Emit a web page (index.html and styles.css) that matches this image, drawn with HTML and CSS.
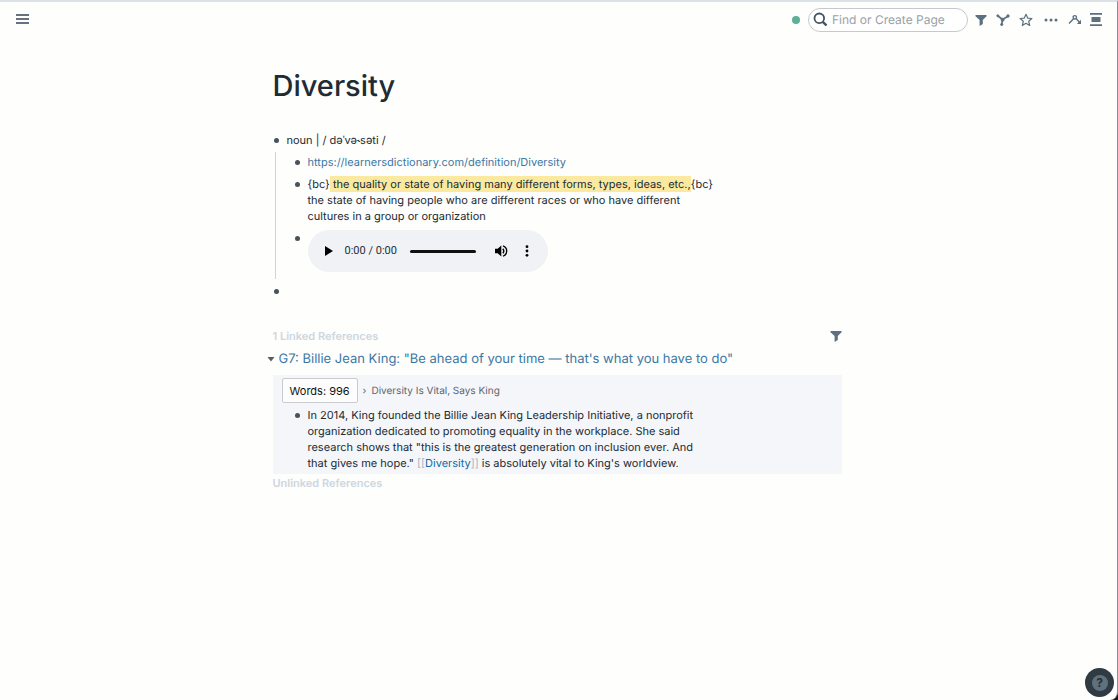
FILE: index.html
```html
<!DOCTYPE html>
<html lang="en">
<head>
  <meta charset="UTF-8">
  <title>Diversity</title>
  <link rel="stylesheet" href="styles.css">
</head>
<body>
  <div class="app">
    <header class="topbar">
      <button class="icon-btn menu-btn" type="button" aria-label="Menu">
        <svg width="14" height="12" viewBox="0 0 14 12" fill="#66737f"><path d="M0 0h13v2H0zM0 4h13v2H0zM0 8h13v2H0z"/></svg>
      </button>

      <div class="tools">
        <span class="status"></span>
        <label class="search">
          <svg width="15" height="15" viewBox="0 0 15 15" fill="none" stroke="#43535f" stroke-width="1.8"><circle cx="6.3" cy="6.3" r="4.8"/><path d="M9.8 9.8l3.7 3.7" stroke-width="2.4"/></svg>
          <input type="text" placeholder="Find or Create Page" aria-label="Find or Create Page">
        </label>
        <button class="icon-btn filter-btn" type="button" aria-label="Filter">
          <svg width="12" height="12" viewBox="0 0 12 12" fill="#5c7080"><path d="M1 1h10a.7.7 0 0 1 .5 1.2L7.800 6v4L4.600 11.900V6L.5 2.200A.7.7 0 0 1 1 1z"/></svg>
        </button>
        <button class="icon-btn graph-btn" type="button" aria-label="Graph">
          <svg width="14" height="14" viewBox="0 0 14 14" fill="#5c7080" stroke="#5c7080"><path d="M2 3l4.500 3.500L12 3.200M6.500 6.500l-.8 5" fill="none" stroke-width="1.700"/><circle cx="1.800" cy="2.800" r="1"/><circle cx="12" cy="3" r="1.200"/><circle cx="6.600" cy="6.700" r="1.500"/><circle cx="5.700" cy="11.500" r="1.100"/></svg>
        </button>
        <button class="icon-btn star-btn" type="button" aria-label="Add shortcut">
          <svg width="14" height="14" viewBox="0 0 14 14" fill="none" stroke="#5c7080" stroke-width="1.2" stroke-linejoin="round"><path d="M7 1.3l1.7 3.8 4.2.4-3.2 2.8 1 4.200L7 10.300l-3.700 2.200 1-4.200L1.100 5.500l4.200-.4z"/></svg>
        </button>
        <button class="icon-btn more-btn" type="button" aria-label="More">
          <svg width="14" height="4" viewBox="0 0 14 4" fill="#5c7080"><circle cx="2" cy="2" r="1.5"/><circle cx="7" cy="2" r="1.5"/><circle cx="12" cy="2" r="1.5"/></svg>
        </button>
        <button class="icon-btn path-btn" type="button" aria-label="Path">
          <svg width="14" height="12" viewBox="0 0 14 12" fill="none" stroke="#5c7080" stroke-width="1.4"><path d="M1 9.500l4.600-4.700M8 4.600l3.500 3.700"/><circle cx="6.800" cy="3.300" r="1.700"/><path d="M13 5.800V10H8.800z" fill="#5c7080" stroke="none"/></svg>
        </button>
        <button class="icon-btn side-btn" type="button" aria-label="Open right sidebar">
          <svg width="12" height="13" viewBox="0 0 12 13" fill="#5c7080"><path d="M0 0h12v1.700H0zM0 11.300h12V13H0z"/><rect x="1.500" y="4" width="9" height="5" rx=".6"/></svg>
        </button>
      </div>
    </header>

    <main class="page">
      <h1>Diversity</h1>

      <ul class="blocks">
        <li>
          <div class="block">noun | / də&#712;və&#734;səti /</div>
          <ul class="blocks children">
            <li><div class="block"><a href="https://learnersdictionary.com/definition/Diversity">https://learnersdictionary.com/definition/Diversity</a></div></li>
            <li><div class="block">{bc}<mark> the quality or state of having many different forms, types, ideas, etc.,</mark>{bc}<br>the state of having people who are different races or who have different cultures in a group or organization</div></li>
            <li class="audio-item">
              <div class="player">
                <button class="icon-btn" type="button" aria-label="Play">
                  <svg width="8" height="10" viewBox="0 0 8 10"><path d="M0 0l8 5-8 5z"/></svg>
                </button>
                <span class="time">0:00 / 0:00</span>
                <input class="seek" type="range" min="0" max="100" value="0" aria-label="Seek">
                <button class="icon-btn mute-btn" type="button" aria-label="Mute">
                  <svg width="14" height="14" viewBox="0 0 14 14"><path d="M1 4.800h2.700L7.300 1.500v11L3.700 9.200H1z"/><path d="M8.800 4.700q2 2.300 0 4.600M9 1.800a5.500 5.500 0 0 1 0 10.400" fill="none" stroke="#000" stroke-width="1.400"/></svg>
                </button>
                <button class="icon-btn dots-btn" type="button" aria-label="Player options">
                  <svg width="4" height="12" viewBox="0 0 4 12"><circle cx="2" cy="1.700" r="1.400"/><circle cx="2" cy="6" r="1.400"/><circle cx="2" cy="10.300" r="1.400"/></svg>
                </button>
              </div>
            </li>
          </ul>
        </li>
        <li class="empty-item"><div class="block"></div></li>
      </ul>

      <section class="references">
        <div class="ref-head">
          <h2>1 Linked References</h2>
          <button class="icon-btn" type="button" aria-label="Filter references">
            <svg width="12" height="12" viewBox="0 0 12 12" fill="#5c7080"><path d="M1 1h10a.7.7 0 0 1 .5 1.200L7.800 6v4L4.600 11.900V6L.5 2.200A.7.7 0 0 1 1 1z"/></svg>
          </button>
        </div>

        <h3 class="ref-title">
          <svg width="8" height="5" viewBox="0 0 8 5" fill="#5c5c5c"><path d="M.5 0h7L4 4.500z"/></svg>
          <a href="#">G7: Billie Jean King: "Be ahead of your time — that's what you have to do"</a>
        </h3>

        <div class="ref-card">
          <div class="crumbs">
            <button class="words" type="button">Words: 996</button>
            <span>›</span>
            <span>Diversity Is Vital, Says King</span>
          </div>
          <ul class="blocks">
            <li><div class="block">In 2014, King founded the Billie Jean King Leadership Initiative, a nonprofit organization dedicated to promoting equality in the workplace. She said research shows that "this is the greatest generation on inclusion ever. And that gives me hope." <span class="bracket">[[</span><a class="page-ref" href="#">Diversity</a><span class="bracket">]]</span> is absolutely vital to King's worldview.</div></li>
          </ul>
        </div>
        <h2>Unlinked References</h2>
      </section>
    </main>

    <button class="help" type="button" aria-label="Help"><span>?</span></button>
  </div>
</body>
</html>
```
FILE: styles.css
```css
* {
  box-sizing: border-box;
}

body {
  margin: 0;
  background-color: #17191b;
  color: #202b33;
  font-family: Inter, "Liberation Sans", sans-serif;
  font-size: 11px;
  line-height: 16px;
  text-rendering: geometricPrecision;
}

.app {
  min-height: 100vh;
  padding-right: 3px;
  background-color: #fefefd;
  border-top: 2px solid #dce1e7;
  border-right: 1px solid #8b8f94;
  border-bottom-right-radius: 8px;
}

h1, h2, h3, ul {
  margin: 0;
  padding: 0;
}

a {
  color: #3b77a3;
  text-decoration: none;
}

.icon-btn {
  display: flex;
  align-items: center;
  justify-content: center;
  padding: 0;
  border: none;
  background: none;
  cursor: pointer;
}

/* Top bar */
.topbar {
  display: flex;
  align-items: center;
  justify-content: space-between;
  height: 35px;
  padding: 0 12px 0 16px;
}

.tools {
  display: flex;
  align-items: center;
}

.status {
  width: 8px;
  height: 8px;
  margin-right: 8px;
  border-radius: 50%;
  background-color: #5bb096;
}

.search {
  display: flex;
  align-items: center;
  gap: 4px;
  width: 160px;
  height: 24px;
  margin-right: 7px;
  padding: 0 4px;
  border: 1px solid #c6c9ce;
  border-radius: 12px;
  background-color: #fff;
}

.search svg {
  flex: none;
}

.search input {
  width: 100%;
  min-width: 0;
  padding: 0;
  border: none;
  outline: none;
  background: none;
  font: inherit;
  font-size: 12px;
  text-rendering: inherit;
}

.search input::placeholder {
  color: #9a9fa6;
}

.graph-btn,
.star-btn {
  margin-left: 9px;
}

.more-btn {
  margin-left: 11px;
}

.path-btn {
  margin-left: 10px;
}

.side-btn {
  margin-left: 8px;
}

/* Page */
.page {
  max-width: 569px;
  margin: 0 auto;
  padding-top: 29px;
}

h1 {
  margin-bottom: 27px;
  font-size: 29px;
  font-weight: 500;
  line-height: 39px;
}

.blocks {
  list-style: none;
}

.blocks li {
  position: relative;
  padding-left: 14px;
}

.blocks li::before {
  content: '';
  position: absolute;
  top: 6px;
  left: 1px;
  width: 5px;
  height: 5px;
  border-radius: 50%;
  background-color: #47525b;
}

.block {
  max-width: 413px;
  min-height: 16px;
}

.children {
  margin-top: 4px;
  margin-left: -12px;
  padding: 2px 0 7px 18px;
  border-left: 1px solid #d0d3d8;
}

.children li {
  margin-bottom: 6px;
}

.children li:last-child {
  margin-bottom: 0;
}

mark {
  padding: 1px 0;
  background-color: #fbe9a0;
  color: inherit;
}

.player {
  display: flex;
  align-items: center;
  width: 240px;
  height: 42px;
  padding: 0 19px 0 17px;
  border-radius: 21px;
  background-color: #f1f2f5;
}

.time {
  margin: 0 13px 0 12px;
  font-family: Roboto, sans-serif;
}

.seek {
  flex: 1;
  min-width: 0;
  height: 3px;
  margin: 0;
  border-radius: 2px;
  background-color: #111;
  appearance: none;
}

.seek::-webkit-slider-thumb {
  width: 0;
  height: 0;
  appearance: none;
}

.mute-btn {
  margin-left: 18px;
}

.dots-btn {
  margin-left: 17px;
}

.empty-item {
  margin-top: 4px;
}

/* References */
.references {
  margin-top: 28px;
}

.ref-head {
  display: flex;
  align-items: center;
  justify-content: space-between;
}

h2 {
  color: #ced6dd;
  font-size: 11px;
  font-weight: 600;
  line-height: 18px;
}

.ref-title {
  display: flex;
  align-items: center;
  gap: 4px;
  margin: 5px 0 7px -6px;
  font-size: 13px;
  font-weight: 400;
  line-height: 18px;
}

.ref-card {
  padding: 3px 9px;
  background-color: #f5f6fa;
}

.ref-card .block {
  max-width: 407px;
}

.crumbs {
  display: flex;
  align-items: center;
  gap: 5px;
  margin-bottom: 4px;
  color: #5a6570;
  font-size: 10px;
}

.words {
  height: 25px;
  padding: 0 7px;
  border: 1px solid #c9cbd0;
  border-radius: 2px;
  background-color: #fdfdfd;
  color: #111;
  font: inherit;
  font-size: 11px;
}

.ref-card .blocks {
  padding-left: 12px;
}

.bracket {
  color: #a9b4be;
}

.page-ref {
  color: #106ba3;
}

.help {
  position: fixed;
  right: 4px;
  bottom: 3px;
  display: flex;
  align-items: center;
  justify-content: center;
  width: 29px;
  height: 29px;
  padding: 0;
  border: none;
  border-radius: 50%;
  background-color: #303a42;
}

.help span {
  width: 16px;
  height: 16px;
  border-radius: 50%;
  background-color: #60717e;
  color: #252e35;
  font-family: Inter, sans-serif;
  font-size: 12px;
  font-weight: 700;
  line-height: 16px;
}
```
